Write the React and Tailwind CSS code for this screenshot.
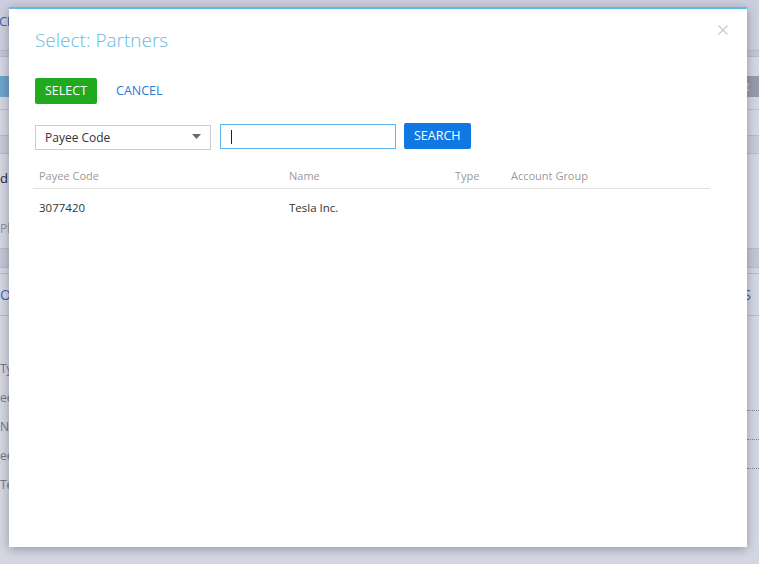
import { useState } from "react";

const rows = [
    { code: "3077420", name: "Tesla Inc.", type: "", group: "" },
];

export default function App() {
    const [field, setField] = useState("payee");
    const [query, setQuery] = useState("");

    return (
        <div className="relative h-[564px] w-[759px] overflow-hidden bg-white font-['Open_Sans',sans-serif]">
            {/* Página de fondo */}
            <BackgroundPage />

            {/* Overlay */}
            <div className="absolute inset-0 bg-[rgba(40,50,110,0.2)]" />

            {/* Modal */}
            <div className="absolute left-[9px] top-[7px] flex h-[540px] w-[738px] flex-col border-t-2 border-[#5bbde6] bg-white px-[26px] shadow-[0_2px_10px_rgba(0,0,0,0.3)]">
                <button className="absolute right-[19px] top-[16px] text-[#c9c9c9]">
                    <svg width="10" height="10" viewBox="0 0 10 10" fill="none" stroke="currentColor" strokeWidth="1.2">
                        <path d="M0.5 0.5 L9.5 9.5 M9.5 0.5 L0.5 9.5" />
                    </svg>
                </button>

                <h1 className="mt-[18px] text-[19px] font-light leading-[26px] text-[#6ab9e2]">
                    Select: Partners
                </h1>

                <div className="mt-[25px] flex items-center gap-[19px]">
                    <button className="h-[26px] rounded-[2px] bg-[#22aa1e] px-[10px] text-[12.5px] leading-[26px] text-white">
                        SELECT
                    </button>
                    <button className="text-[12.5px] leading-[26px] text-[#2b7bd1]">CANCEL</button>
                </div>

                <div className="mt-[19px] flex items-center">
                    <div className="relative h-[25px] w-[176px]">
                        <select
                            value={field}
                            onChange={(e) => setField(e.target.value)}
                            className="h-full w-full appearance-none border border-[#cccccc] bg-white pl-[9px] text-[12px] text-[#333] outline-none"
                        >
                            <option value="payee">Payee Code</option>
                            <option value="name">Name</option>
                        </select>
                        <svg className="pointer-events-none absolute right-[10px] top-[10px]" width="9" height="5" viewBox="0 0 9 5">
                            <path d="M0 0 H9 L4.5 5 Z" fill="#6b6b6b" />
                        </svg>
                    </div>
                    <div className="relative ml-[9px] h-[25px] w-[176px] border border-[#5db5e9]">
                        <input
                            value={query}
                            onChange={(e) => setQuery(e.target.value)}
                            className="h-full w-full px-[9px] text-[12px] outline-none"
                        />
                        <span className="pointer-events-none absolute left-[10px] top-[5px] h-[14px] w-px bg-[#222]" />
                    </div>
                    <button className="ml-[8px] h-[26px] rounded-[2px] bg-[#0f78e3] px-[10px] text-[12.5px] leading-[26px] text-white">
                        SEARCH
                    </button>
                </div>

                <table className="mt-[15px] w-[677px] -ml-[2px] border-collapse text-left">
                    <thead>
                        <tr className="border-b border-[#e2e2e2] text-[11px] text-[#9a9a9a]">
                            <th className="h-[24px] w-[250px] pl-[6px] font-normal">Payee Code</th>
                            <th className="w-[166px] pl-[6px] font-normal">Name</th>
                            <th className="w-[56px] pl-[6px] font-normal">Type</th>
                            <th className="pl-[6px] font-normal">Account Group</th>
                        </tr>
                    </thead>
                    <tbody>
                        {rows.map((r) => (
                            <tr key={r.code} className="text-[11.5px] text-[#333]">
                                <td className="h-[38px] pl-[6px]">{r.code}</td>
                                <td className="pl-[6px]">{r.name}</td>
                                <td className="pl-[6px]">{r.type}</td>
                                <td className="pl-[6px]">{r.group}</td>
                            </tr>
                        ))}
                    </tbody>
                </table>
            </div>
        </div>
    );
}

/* === Fondo (queda casi todo oculto por el modal) === */
function BackgroundPage() {
    return (
        <div className="flex flex-col text-[13px]">
            <div className="flex h-[50px] items-start bg-[#f7f7fa] pt-[12px]">
                <span className="-ml-[1px] text-[13px] tracking-[-0.5px] text-[#3370d8]">CE</span>
            </div>
            <div className="h-[7px] border-y border-[#dcdce4] bg-[#ebebf0]" />
            <div className="flex h-[19px]" />
            <div className="flex h-[21px] justify-between">
                <div className="w-[14px] bg-[#81bfe4]" />
                <div className="flex w-[26px] items-center bg-[#b4b4bc] pl-[2px] text-[12px] text-[#f4f4f4]">nit</div>
            </div>
            <div className="h-[13px] border-b border-[#e3e3e8]" />
            <div className="h-[25px]" />
            <div className="h-[19px] border-y border-[#dcdce4] bg-[#f0f0f4]" />
            <div className="h-[16px]" />
            <div className="h-[20px] leading-[16px] text-[#222]">
                <span>d</span>
            </div>
            <div className="h-[30px]" />
            <div className="h-[28px] text-[12px] text-[#aaa]">
                <span>Ph</span>
            </div>
            <div className="h-[20px] border-y border-[#dcdce4] bg-[#ebebf0]" />
            <div className="h-[6px] border-b border-[#dcdce4]" />
            <div className="flex h-[42px] items-center justify-between border-b border-[#dcdce4] text-[14px] text-[#3370d8]">
                <span>OF</span>
                <span className="mr-[8px]">S</span>
            </div>
            <div className="h-[38px]" />
            <div className="flex flex-col text-[12px] text-[#888]">
                <BgField label="Ty" />
                <BgField label="ee" dotted />
                <BgField label="Na" dotted />
                <BgField label="ee" dotted />
                <BgField label="Te" />
            </div>
        </div>
    );
}

function BgField({ label, dotted }) {
    return (
        <div className="flex h-[29px] items-center justify-between">
            <span>{label}</span>
            {dotted ? <span className="mt-[26px] w-[12px] border-b border-dotted border-[#999]" /> : null}
        </div>
    );
}
